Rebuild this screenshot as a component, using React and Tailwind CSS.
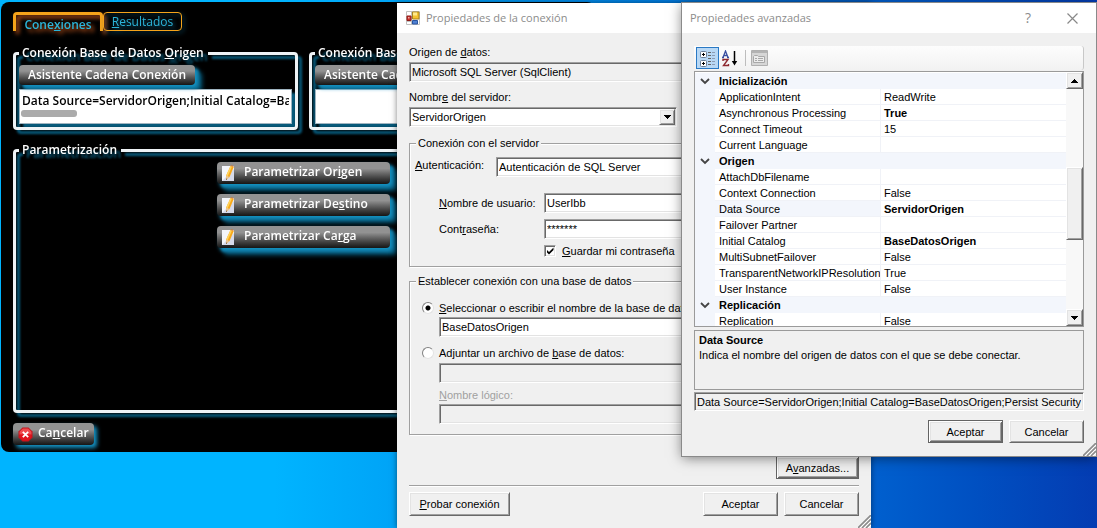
import React, { useState } from 'react';

const sunken =
  'border border-t-[#a0a0a0] border-l-[#a0a0a0] border-r-white border-b-white shadow-[inset_1px_1px_#696969,inset_-1px_-1px_#e3e3e3] rounded-none';
const raised =
  'border border-t-white border-l-white border-r-[#696969] border-b-[#696969] shadow-[inset_1px_1px_#e3e3e3,inset_-1px_-1px_#a0a0a0] bg-[#f0f0f0]';
const defaultRaised =
  'border border-[#646464] shadow-[inset_1px_1px_#ffffff,inset_-1px_-1px_#696969,inset_2px_2px_#e3e3e3,inset_-2px_-2px_#a0a0a0] bg-[#f0f0f0]';
const etched =
  'border border-[#a0a0a0] shadow-[inset_1px_1px_#ffffff,1px_1px_#ffffff]';

const sections = [
  {
    name: 'Inicialización',
    rows: [
      { name: 'ApplicationIntent', value: 'ReadWrite' },
      { name: 'Asynchronous Processing', value: 'True', bold: true },
      { name: 'Connect Timeout', value: '15' },
      { name: 'Current Language', value: '' },
    ],
  },
  {
    name: 'Origen',
    rows: [
      { name: 'AttachDbFilename', value: '' },
      { name: 'Context Connection', value: 'False' },
      { name: 'Data Source', value: 'ServidorOrigen', bold: true, selected: true },
      { name: 'Failover Partner', value: '' },
      { name: 'Initial Catalog', value: 'BaseDatosOrigen', bold: true },
      { name: 'MultiSubnetFailover', value: 'False' },
      { name: 'TransparentNetworkIPResolution', value: 'True' },
      { name: 'User Instance', value: 'False' },
    ],
  },
  {
    name: 'Replicación',
    rows: [{ name: 'Replication', value: 'False' }],
  },
];

const Grip = () => (
  <svg className="absolute right-0 bottom-0" width="13" height="13" viewBox="0 0 13 13">
    <path d="M0 13 13 0M4 13l9-9M8 13l5-5" stroke="#8c8c8c" strokeWidth="1.6" />
    <path d="M2 13 13 2M6 13l7-7M10 13l3-3" stroke="#fff" strokeWidth="1" />
  </svg>
);

const Arrow = ({ up }) => (
  <svg width="7" height="4" viewBox="0 0 7 4" shapeRendering="crispEdges">
    <path d={up ? 'M0 4h7L4 0H3z' : 'M0 0h7L4 4H3z'} fill="#000" />
  </svg>
);

const NoteIcon = () => (
  <svg width="15" height="17" viewBox="0 0 15 17">
    <path d="M1 1h12v15H1z" fill="#f4f6fb" />
    <path d="M1 16 13 4v12z" fill="#c9cee2" opacity=".7" />
    <path d="M9.500 1 12.800 2 8.500 12 5 15l.2-4.500z" fill="#f7a81b" />
    <path d="m9.500 1 1.500.4L6.700 11.200 5.200 10.500z" fill="#ffd45e" />
    <path d="M5.200 10.500 8.500 12 5 15z" fill="#e9c79a" />
    <path d="m5.100 13.400.9.6-1 1z" fill="#3a2a1a" />
    <path d="M9.500 1c.8-1 3.300-.2 3.300 1z" fill="#d9701c" />
  </svg>
);

const CancelIcon = () => (
  <svg width="15" height="15" viewBox="0 0 15 15">
    <path d="M4.500 .5h6l4 4v6l-4 4h-6l-4-4v-6z" fill="#c3121b" />
    <path d="M4.800 1.500h5.400l3.300 3.300v3H1.500v-3z" fill="#f04a4e" />
    <path d="M1.500 7.500h12v2.700l-3.300 3.300H4.800l-3.300-3.300z" fill="#e0131d" />
    <path d="m4.800 4.800 5.400 5.400m0-5.400-5.400 5.400" stroke="#fff" strokeWidth="1.800" />
  </svg>
);

const FormIcon = () => (
  <svg width="14" height="14" viewBox="0 0 14 14">
    <path d="M.5 .5h13v13H.5z" fill="#fff" stroke="#c0c0c0" />
    <path d="M.5 10.500h5M5.500 .5v13" stroke="#c0c0c0" />
    <path d="M6.500 1h6.500v7H6.500z" fill="#f5c22f" stroke="#a8831f" />
    <path d="M7 1.500h4v3H7z" fill="#ffe98a" />
    <path d="M1 5h4v4.500H1z" fill="#c9302c" stroke="#8e1b17" />
    <path d="M2 6h1.500v1.500H2z" fill="#f6b0a8" />
    <path d="M6.500 9.500h5v3.500h-5z" fill="#4f80d2" stroke="#2a55a0" />
  </svg>
);

const CategoryIcon = () => (
  <svg width="17" height="17" viewBox="0 0 17 17">
    <rect x="1.500" y="1.500" width="6" height="6" rx="1" fill="#fff" stroke="#6b7f98" />
    <rect x="1.500" y="10.500" width="6" height="6" rx="1" fill="#fff" stroke="#6b7f98" />
    <path d="M3 4.500h3M4.500 3v3M3 13.500h3M4.500 12v3" stroke="#000" />
    <path d="M9 2.500h3M9 5.500h3M9 8.500h3M9 11.500h3M9 14.500h3" stroke="#666" />
    <path d="M13 2.500h3M13 5.500h3M13 8.500h3M13 11.500h3M13 14.500h3" stroke="#8b9cb5" />
  </svg>
);

const SortIcon = () => (
  <svg width="17" height="17" viewBox="0 0 17 17" fill="none">
    <path d="M1 7.500 3.500 1 6 7.500M2 5.500h3M0 7.500h2M5 7.500h2" stroke="#3a4fa0" strokeWidth="1.300" />
    <path d="M1 11V9.500h5L1.500 15.500h5V14" stroke="#8e2a30" strokeWidth="1.400" />
    <path d="M12.500 1v11" stroke="#000" strokeWidth="1.500" />
    <path d="M9.800 11h5.400l-2.700 4.500z" fill="#000" />
  </svg>
);

const PagesIcon = () => (
  <svg width="17" height="16" viewBox="0 0 17 16" fill="none">
    <path d="M.5 .5h16v15H.5z" fill="#d6d6d6" stroke="#b0b0b0" />
    <path d="M1 1h15v2H1z" fill="#b3b3b3" />
    <path d="M2.500 6.500l1-1h3l1 1h6v6h-11z" fill="#ececec" stroke="#a8a8a8" />
    <path d="M4 8.500h2M7 8.500h5M4 10.500h2M7 10.500h5" stroke="#a8a8a8" />
  </svg>
);

const GlossyButton = ({ className, children }) => (
  <button
    type="button"
    className={`flex items-center rounded-[4px] bg-linear-to-b from-[#929292] from-30% to-[#161616] font-semibold whitespace-nowrap text-white drop-shadow-[3px_3px_2px_#1593c4] ${className}`}
  >
    {children}
  </button>
);

const Group = ({ title, className, children }) => (
  <fieldset
    className={`min-w-0 rounded-[4px] border-3 border-[#eef3f6] px-[3px] drop-shadow-[4px_4px_1px_#06597a] ${className}`}
  >
    <legend className="pr-1 pl-[3px] leading-4 font-semibold">{title}</legend>
    {children}
  </fieldset>
);

const MainWindow = () => (
  <main className="absolute top-[2px] left-px w-[594px] rounded-[8px] bg-black pt-[10px] pr-px pb-[7px] pl-3 font-['Open_Sans','Noto_Sans',sans-serif] text-[12px] text-white">
    <nav className="flex text-[#2cb4d8]">
      <button
        type="button"
        className="h-[19px] w-[90px] rounded-t-[4px] border-3 border-b-0 border-[#f5a31a] leading-5 font-semibold drop-shadow-[3px_3px_2px_#c4561c]"
      >
        Cone<u>x</u>iones
      </button>
      <button
        type="button"
        className="h-[19px] w-[79px] rounded-[4px] border border-[#f5a31a] leading-4 drop-shadow-[2px_2px_2px_#0d5a78]"
      >
        <u>R</u>esultados
      </button>
    </nav>

    <div className="mt-[14px] grid grid-cols-2 gap-[11px]">
      <Group title={<>Conexión Base de Datos <u>O</u>rigen</>} className="h-[85px]">
        <GlossyButton className="mt-1 h-5 px-[9px]">Asistente Cadena Conexión</GlossyButton>
        <div className="mt-1 h-[35px] border border-[#9fb4c0] bg-white">
          <input
            aria-label="Cadena de conexión origen"
            readOnly
            className="block h-5 w-full px-[2px] font-semibold text-black outline-none"
            defaultValue="Data Source=ServidorOrigen;Initial Catalog=BaseDatosOrigen"
          />
          <div className="ml-px h-[7px] w-14 rounded-[3px] bg-[#ababab]" />
        </div>
      </Group>
      <Group title="Conexión Base" className="h-[85px]">
        <GlossyButton className="mt-1 h-5 px-[9px]">Asistente Cadena</GlossyButton>
        <div className="mt-1 h-[35px] border border-[#9fb4c0] bg-white" />
      </Group>
    </div>

    <Group title="Parametrización" className="mt-[12px] h-[271px]">
      <div className="mx-auto mt-1 flex w-[173px] flex-col gap-[10px]">
        <GlossyButton className="h-[22px] gap-2 px-1"><NoteIcon /><span className="-mt-[2px]">Parametrizar Or<u>i</u>gen</span></GlossyButton>
        <GlossyButton className="h-[22px] gap-2 px-1"><NoteIcon /><span className="-mt-[2px]">Parametrizar De<u>s</u>tino</span></GlossyButton>
        <GlossyButton className="h-[22px] gap-2 px-1"><NoteIcon /><span className="-mt-[2px]">Parametrizar Ca<u>r</u>ga</span></GlossyButton>
      </div>
    </Group>

    <GlossyButton className="mt-[10px] h-[22px] gap-[5px] px-[5px]">
      <CancelIcon /><span className="-mt-[2px]">Ca<u>n</u>celar</span>
    </GlossyButton>
  </main>
);

const ConnectionDialog = () => {
  const [mode, setMode] = useState('select');

  return (
    <section className="absolute top-[3px] left-[397px] w-[474px] bg-[#f0f0f0] font-['Liberation_Sans',Arial,sans-serif] text-[11px] leading-4 shadow-[0_0_6px_rgba(0,0,0,0.5)]">
      <header className="flex h-[30px] items-center gap-[6px] bg-white px-[9px] font-['Open_Sans','Noto_Sans',sans-serif] text-[11px] text-[#8c8c8c]">
        <FormIcon />
        <h1>Propiedades de la conexión</h1>
      </header>

      <form className="px-3 pt-[11px] pb-3" onSubmit={(e) => e.preventDefault()}>
        <label htmlFor="origen" className="block">Origen de <u>d</u>atos:</label>
        <input id="origen" readOnly defaultValue="Microsoft SQL Server (SqlClient)" className={`mt-[2px] block h-5 w-[350px] px-[2px] ${sunken}`} />

        <label htmlFor="servidor" className="mt-[7px] block">Nombr<u>e</u> del servidor:</label>
        <div className="relative mt-[2px] w-[268px]">
          <select id="servidor" className={`block h-5 w-full appearance-none bg-white px-[2px] ${sunken}`}>
            <option>ServidorOrigen</option>
          </select>
          <span className={`pointer-events-none absolute top-[2px] right-[2px] flex h-4 w-4 items-center justify-center ${raised}`}>
            <Arrow />
          </span>
        </div>

        <fieldset className={`mt-2 h-[132px] px-[5px] ${etched}`}>
          <legend className="ml-px bg-[#f0f0f0] px-[2px]">Conexión con el servidor</legend>
          <div className="mt-[6px] flex">
            <label htmlFor="autenticacion" className="w-[81px]"><u>A</u>utenticación:</label>
            <select id="autenticacion" className={`h-5 flex-1 appearance-none bg-white px-[2px] ${sunken}`}>
              <option>Autenticación de SQL Server</option>
            </select>
          </div>
          <div className="mt-4 ml-6 grid grid-cols-[105px_1fr] items-center gap-y-[6px]">
            <label htmlFor="usuario"><u>N</u>ombre de usuario:</label>
            <input id="usuario" defaultValue="UserIbb" className={`h-5 bg-white px-[2px] ${sunken}`} />
            <label htmlFor="clave">Cont<u>r</u>aseña:</label>
            <input id="clave" defaultValue="*******" className={`h-5 bg-white px-[2px] ${sunken}`} />
          </div>
          <label className="mt-1 ml-[129px] flex items-center gap-[6px]">
            <span className="relative h-3 w-3">
              <input type="checkbox" defaultChecked className={`peer block h-3 w-3 appearance-none bg-white ${sunken}`} />
              <svg className="pointer-events-none absolute top-[2px] left-[2px] hidden peer-checked:block" width="8" height="8" viewBox="0 0 8 8">
                <path d="M1 3v2.500l2 2 4.500-4.500V.5L3 5z" fill="#000" />
              </svg>
            </span>
            <span><u>G</u>uardar mi contraseña</span>
          </label>
        </fieldset>

        <fieldset className={`mt-[6px] h-[162px] px-3 ${etched}`}>
          <legend className="-ml-[6px] bg-[#f0f0f0] px-[2px]">Establecer conexión con una base de datos</legend>
          <label className="mt-[11px] flex items-center gap-[5px]">
            <input
              type="radio"
              name="modo"
              checked={mode === 'select'}
              onChange={() => setMode('select')}
              className="h-3 w-3 appearance-none rounded-full border border-t-[#808080] border-l-[#808080] border-r-[#e3e3e3] border-b-[#e3e3e3] bg-white checked:bg-[radial-gradient(#000_2px,#fff_3px)]"
            />
            <span><u>S</u>eleccionar o escribir el nombre de la base de datos:</span>
          </label>
          <input aria-label="Nombre de la base de datos" defaultValue="BaseDatosOrigen" className={`mt-px ml-[17px] block h-5 w-[400px] bg-white px-[2px] ${sunken}`} />
          <label className="mt-2 flex items-center gap-[5px]">
            <input
              type="radio"
              name="modo"
              checked={mode === 'attach'}
              onChange={() => setMode('attach')}
              className="h-3 w-3 appearance-none rounded-full border border-t-[#808080] border-l-[#808080] border-r-[#e3e3e3] border-b-[#e3e3e3] bg-white checked:bg-[radial-gradient(#000_2px,#fff_3px)]"
            />
            <span>Adjuntar un archivo de <u>b</u>ase de datos:</span>
          </label>
          <input aria-label="Archivo de base de datos" disabled className={`mt-[2px] ml-[17px] block h-5 w-[400px] ${sunken}`} />
          <label htmlFor="logico" className="mt-1 ml-[17px] block text-[#a0a0a0]"><u>N</u>ombre lógico:</label>
          <input id="logico" disabled className={`mt-px ml-[17px] block h-5 w-[400px] ${sunken}`} />
        </fieldset>

        <button type="button" className={`mt-[21px] ml-auto block h-[23px] w-[83px] ${defaultRaised}`}>A<u>v</u>anzadas...</button>
        <hr className="mt-[6px] h-[2px] border-t-[#a0a0a0] border-b border-b-white" />
        <div className="mt-[5px] flex">
          <button type="button" className={`mr-auto h-6 w-[101px] ${raised}`}><u>P</u>robar conexión</button>
          <button type="submit" className={`h-6 w-[75px] ${raised}`}>Aceptar</button>
          <button type="button" className={`ml-[6px] h-6 w-[75px] ${raised}`}>Cancelar</button>
        </div>
      </form>
      <Grip />
    </section>
  );
};

const PropertyTable = () => (
  <div className="flex h-[256px] border border-[#9a9a9a] bg-white">
    <div className="min-w-0 flex-1 overflow-hidden pt-px">
      <table className="w-full table-fixed border-separate border-spacing-0 leading-[14px]">
        <colgroup>
          <col className="w-5" />
          <col className="w-[166px]" />
          <col />
        </colgroup>
        {sections.map((section) => (
          <tbody key={section.name}>
            <tr className="h-4 bg-[#f3f6fc]">
              <td className="p-0">
                <svg className="mx-auto" width="10" height="7" viewBox="0 0 10 7" fill="none">
                  <path d="m1 1 4 4 4-4" stroke="#444" strokeWidth="1.800" />
                </svg>
              </td>
              <th colSpan={2} className="p-0 pl-1 text-left font-bold">{section.name}</th>
            </tr>
            {section.rows.map((row) => (
              <tr key={row.name} className="h-4">
                <td className="bg-[#f3f6fc] p-0" />
                <td className={`overflow-hidden border-r border-b border-[#f0f2f7] p-0 pt-px pl-1 whitespace-nowrap ${row.selected ? 'bg-[#f3f6fc]' : ''}`}>
                  {row.name}
                </td>
                <td className={`border-b border-[#f0f2f7] p-0 pt-px pl-[3px] ${row.bold ? 'font-bold' : ''}`}>{row.value}</td>
              </tr>
            ))}
          </tbody>
        ))}
      </table>
    </div>
    <div className="flex w-[17px] flex-col bg-[#f8f8f8]">
      <button type="button" aria-label="Subir" className={`flex h-[17px] items-center justify-center ${raised}`}><Arrow up /></button>
      <div className={`mt-[78px] h-[73px] ${raised}`} />
      <button type="button" aria-label="Bajar" className={`mt-auto flex h-[17px] items-center justify-center ${raised}`}><Arrow /></button>
    </div>
  </div>
);

const AdvancedDialog = () => (
  <section className="absolute top-[3px] left-[682px] w-[414px] bg-[#f0f0f0] font-['Liberation_Sans',Arial,sans-serif] text-[11px] leading-4 shadow-[0_0_0_1px_#8a8a8a,0_2px_12px_rgba(0,0,0,0.5)]">
    <header className="flex h-[30px] items-center bg-white pr-[18px] pl-2 font-['Open_Sans','Noto_Sans',sans-serif] text-[11px] text-[#8c8c8c]">
      <h2 className="mr-auto">Propiedades avanzadas</h2>
      <button type="button" aria-label="Ayuda" className="mr-[36px] text-[14px]">?</button>
      <button type="button" aria-label="Cerrar">
        <svg width="11" height="11" viewBox="0 0 11 11"><path d="m.5 .5 10 10m0-10-10 10" stroke="#888" strokeWidth="1.200" /></svg>
      </button>
    </header>

    <div className="px-3 pt-[13px] pb-[13px]">
      <div className="flex h-6 items-center rounded-r-[3px] border-r border-[#c8c8c8] bg-linear-to-b from-[#fdfdfd] to-[#f2f2f2] pl-[2px]">
        <button type="button" aria-label="Por categorías" className="flex h-[22px] w-[23px] items-center justify-center border border-[#2a79c4] bg-[#b8d8f5]"><CategoryIcon /></button>
        <button type="button" aria-label="Alfabético" className="ml-[3px]"><SortIcon /></button>
        <span className="ml-[6px] h-4 w-px bg-[#bdbdbd]" />
        <button type="button" aria-label="Páginas de propiedades" className="ml-[5px]" disabled><PagesIcon /></button>
      </div>
      <div className="mt-px"><PropertyTable /></div>

      <div className="mt-[3px] h-[60px] border border-[#9a9a9a] px-1 pt-px">
        <h3 className="font-bold">Data Source</h3>
        <p className="leading-[15px]">Indica el nombre del origen de datos con el que se debe conectar.</p>
      </div>
      <input
        aria-label="Cadena de conexión"
        readOnly
        defaultValue="Data Source=ServidorOrigen;Initial Catalog=BaseDatosOrigen;Persist Security Info=True"
        className={`mt-[2px] block h-[19px] w-full px-[2px] ${sunken}`}
      />
      <div className="mt-[9px] flex justify-end gap-[6px]">
        <button type="button" className={`h-[23px] w-[75px] ${defaultRaised}`}>Aceptar</button>
        <button type="button" className={`h-[23px] w-[75px] ${raised}`}>Cancelar</button>
      </div>
    </div>
    <Grip />
  </section>
);

export default function App() {
  return (
    <div className="relative h-screen overflow-hidden bg-linear-to-r from-[#00b4ff] from-25% via-[#0070dc] via-70% to-[#043cb2] text-black">
      <MainWindow />
      <ConnectionDialog />
      <AdvancedDialog />
    </div>
  );
}
